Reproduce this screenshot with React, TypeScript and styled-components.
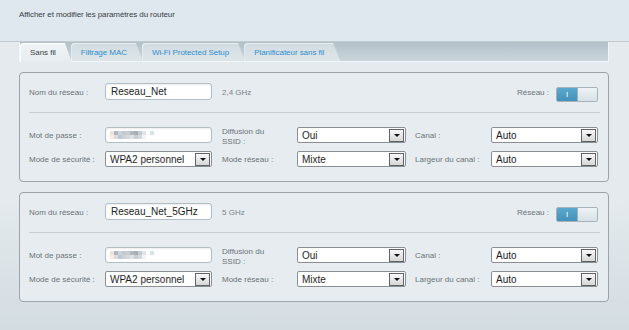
import React from "react";
import styled, { createGlobalStyle } from "styled-components";

const Global = createGlobalStyle`
  html, body { margin: 0; padding: 0; }
  body {
    width: 629px; height: 330px; overflow: hidden;
    font-family: "Liberation Sans", Arial, sans-serif;
    background: #e4eaee;
  }
`;

const Page = styled.div`
  width: 629px;
  height: 330px;
  background: linear-gradient(180deg, #e4eaee 0px, #e4eaee 200px, #d3dce1 330px);
`;

const Header = styled.div`
  height: 42px;
  box-sizing: border-box;
  padding: 10px 0 0 19px;
  background: #dfe8ee;
  border-bottom: 1px solid #c2cacf;
  font-size: 8px;
  line-height: 10px;
  color: #3a3f44;
  letter-spacing: -0.1px;
`;

const Main = styled.div`
  padding: 0 20px 0 19px;
`;

const TabBar = styled.div`
  display: flex;
  height: 20px;
  box-sizing: border-box;
  background: linear-gradient(180deg, #b3c1c8, #cad5db);
  border-left: 1px solid #f2f6f8;
  border-right: 1px solid #f2f6f8;
  border-bottom: 1px solid #f2f6f8;
  padding-top: 1px;
`;

const Tab = styled.div<{ $active?: boolean }>`
  display: flex;
  align-items: center;
  padding: 0 16px 0 10px;
  margin-right: -1px;
  font-size: 8px;
  letter-spacing: -0.05px;
  color: ${(p) => (p.$active ? "#3a3f44" : "#2f8fd0")};
  background: ${(p) =>
    p.$active
      ? "linear-gradient(180deg, #f0f4f6, #e6ecef)"
      : "linear-gradient(180deg, #d0dbe1, #dfe6ea)"};
  height: ${(p) => (p.$active ? "19px" : "18px")};
  border-top-left-radius: 4px;
  clip-path: polygon(0 0, calc(100% - 7px) 0, 100% 100%, 0 100%);
  box-shadow: inset 1px 1px 0 ${(p) => (p.$active ? "#ffffff" : "#e6edf1")};
  position: relative;
  z-index: ${(p) => (p.$active ? 2 : 1)};
`;

const Panel = styled.div`
  margin-top: 10px;
  border: 1px solid #9ba4aa;
  border-radius: 4px;
  padding: 10px 9px 14px 9px;
  background: #e6ecef;
  & + & { margin-top: 10px; }
`;

const TopRow = styled.div`
  display: flex;
  align-items: center;
  height: 17px;
`;

const Label = styled.div<{ $indent?: number; $width?: number }>`
  font-size: 8px;
  line-height: 10px;
  color: #6b7378;
  padding-left: ${(p) => p.$indent ?? 0}px;
  width: ${(p) => (p.$width ? `${p.$width}px` : "auto")};
  flex-shrink: 0;
  padding-top: 2px;
`;

const Freq = styled.div`
  font-size: 8px;
  color: #7a8287;
  margin-left: 10px;
  padding-top: 1px;
`;

const Spacer = styled.div`
  flex: 1;
`;

const TextBox = styled.div<{ $h?: number }>`
  width: 107px;
  height: ${(p) => p.$h ?? 16}px;
  box-sizing: border-box;
  border: 1px solid #b3bec4;
  border-radius: 3px;
  background: #ffffff;
  box-shadow: inset 0 1px 2px rgba(0, 0, 0, 0.08);
  font-size: 10px;
  color: #222;
  padding-left: 5px;
  display: flex;
  align-items: center;
`;

const Mosaic = styled.div`
  display: grid;
  grid-template-columns: repeat(11, 4px);
  grid-auto-rows: 4px;
  margin-left: -1px;
`;

const Cell = styled.span<{ $c: string }>`
  background: ${(p) => p.$c};
`;

const ToggleWrap = styled.div`
  display: flex;
  width: 42px;
  height: 15px;
  box-sizing: border-box;
  border: 1px solid #a5b4bb;
  border-radius: 2px;
  overflow: hidden;
  margin-left: 7px;
  margin-right: 1px;
  margin-top: 6px;
`;

const ToggleOn = styled.div`
  flex: 0 0 20px;
  background: linear-gradient(180deg, #5aa8cc, #4492bb);
  color: #ffffff;
  font-size: 8px;
  display: flex;
  align-items: center;
  justify-content: center;
`;

const ToggleKnob = styled.div`
  flex: 1;
  background: linear-gradient(180deg, #eef3f5, #d6e1e6);
  border-left: 1px solid #9fb2bb;
`;

const Separator = styled.div`
  height: 1px;
  background: #c7cfd4;
  margin: 12px -1px 14px 0;
`;

const Grid = styled.div`
  display: grid;
  grid-template-columns: 76px 107px 85px 109px 85px 107px;
  grid-auto-rows: 16px;
  row-gap: 8px;
  align-items: center;
`;

const SelectBox = styled.div`
  position: relative;
  height: 16px;
  box-sizing: border-box;
  border: 1px solid #8a8f93;
  border-radius: 2px;
  background: #ffffff;
  font-size: 10px;
  color: #1e1e1e;
  padding-left: 4px;
  display: flex;
  align-items: center;
`;

const Arrow = styled.div`
  position: absolute;
  right: 1px;
  top: 1px;
  bottom: 0px;
  width: 15px;
  box-sizing: border-box;
  border: 1px solid #5f6367;
  background: linear-gradient(180deg, #f8f8f8, #d6d6d6);
  display: flex;
  align-items: flex-end;
  justify-content: center;
  padding-bottom: 4px;
  &::after {
    content: "";
    border-top: 3px solid #111;
    border-left: 3px solid transparent;
    border-right: 3px solid transparent;
  }
`;

const TwoLine = styled(Label)`
  line-height: 10px;
  padding-top: 4px;
`;

const Select = ({ value }: { value: string }) => (
  <SelectBox>
    {value}
    <Arrow />
  </SelectBox>
);

const mosaicColors = [
  "#f2e1d5", "#a9b6c6", "#cfd3d8", "#c3c8cd", "#c8cdd2", "#b4b9be", "#a9aeb4", "#c6cbd0", "#e3e6e9", "#ffffff", "#d3e4f2",
  "#f7ece4", "#d8dde2", "#c0c6cc", "#cdd2d7", "#d6dadf", "#dee1e5", "#c9ced3", "#d5d9dd", "#f1f3f5", "#ffffff", "#ffffff",
];

const PasswordBox = () => (
  <TextBox>
    <Mosaic>
      {mosaicColors.map((c, i) => (
        <Cell key={i} $c={c} />
      ))}
    </Mosaic>
  </TextBox>
);

const NetworkPanel = ({ name, freq }: { name: string; freq: string }) => (
  <Panel>
    <TopRow>
      <Label $width={76}>Nom du réseau :</Label>
      <TextBox $h={17}>{name}</TextBox>
      <Freq>{freq}</Freq>
      <Spacer />
      <Label>Réseau :</Label>
      <ToggleWrap>
        <ToggleOn>I</ToggleOn>
        <ToggleKnob />
      </ToggleWrap>
    </TopRow>
    <Separator />
    <Grid>
      <Label>Mot de passe :</Label>
      <PasswordBox />
      <TwoLine $indent={10}>
        Diffusion du
        <br />
        SSID :
      </TwoLine>
      <Select value="Oui" />
      <Label $indent={9}>Canal :</Label>
      <Select value="Auto" />

      <Label>Mode de sécurité :</Label>
      <Select value="WPA2 personnel" />
      <Label $indent={10}>Mode réseau :</Label>
      <Select value="Mixte" />
      <Label $indent={9}>Largeur du canal :</Label>
      <Select value="Auto" />
    </Grid>
  </Panel>
);

export default function App() {
  return (
    <Page>
      <Global />
      <Header>Afficher et modifier les paramètres du routeur</Header>
      <Main>
        <TabBar>
          <Tab $active>Sans fil</Tab>
          <Tab>Filtrage MAC</Tab>
          <Tab>Wi-Fi Protected Setup</Tab>
          <Tab>Planificateur sans fil</Tab>
        </TabBar>
        <NetworkPanel name="Reseau_Net" freq="2,4 GHz" />
        <NetworkPanel name="Reseau_Net_5GHz" freq="5 GHz" />
      </Main>
    </Page>
  );
}
